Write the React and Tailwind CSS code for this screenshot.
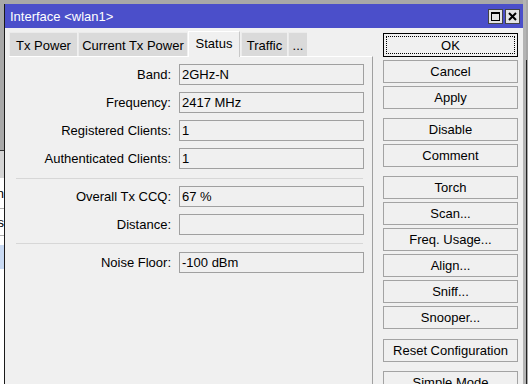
import React from "react";

const rows1 = [
  ["Band:", "2GHz-N"],
  ["Frequency:", "2417 MHz"],
  ["Registered Clients:", "1"],
  ["Authenticated Clients:", "1"],
];

const tabs = [
  { label: "Tx Power", w: "w-[68px]" },
  { label: "Current Tx Power", w: "w-[109px]" },
  { label: "Status", w: "w-[52px]", active: true },
  { label: "Traffic", w: "w-[46px]" },
  { label: "...", w: "w-[19px]" },
];

function Field({ label, value }) {
  return (
    <div className="flex items-center h-[21px] shrink-0">
      <div className="w-[163px] text-right pr-[1px] whitespace-nowrap">{label}</div>
      <div className="ml-[7px] w-[185px] h-[21px] border border-[#a0a0a0] bg-[#f0f0f0] pl-[2px] flex items-center">
        {value}
      </div>
    </div>
  );
}

function Btn({ children, className = "", focus = false }) {
  if (focus) {
    return (
      <div className={"relative shrink-0 h-[24px] border border-black bg-[#f0f0f0] flex items-center justify-center " + className}>
        <div className="absolute inset-[2px] border border-dotted border-black"></div>
        <span>{children}</span>
      </div>
    );
  }
  return (
    <div className={"shrink-0 h-[23px] border border-[#a3a3a3] bg-[#f0f0f0] flex items-center justify-center " + className}>
      {children}
    </div>
  );
}

function BgStrip() {
  // bit of another window peeking out on the left
  return (
    <div className="w-[4px] flex flex-col shrink-0">
      <div className="h-[150px] shrink-0 bg-[#a8a8a8]"></div>
      <div className="h-px shrink-0 bg-[#333]"></div>
      <div className="h-[27px] shrink-0 bg-[#d4d4d4]"></div>
      <div className="h-[30px] shrink-0 bg-white flex justify-end items-center overflow-hidden whitespace-nowrap">n</div>
      <div className="h-px shrink-0 bg-[#b0b0b0]"></div>
      <div className="h-[26px] shrink-0 bg-white flex justify-end items-center overflow-hidden whitespace-nowrap">s</div>
      <div className="h-px shrink-0 bg-[#b0b0b0]"></div>
      <div className="h-[9px] shrink-0 bg-white"></div>
      <div className="h-[24px] shrink-0 bg-[#c9daf3]"></div>
      <div className="flex-1 bg-white"></div>
    </div>
  );
}

export default function App() {
  return (
    <div
      className="w-[528px] h-[384px] overflow-hidden bg-[#a8a8a8] flex text-[13px] text-black leading-none"
      style={{ fontFamily: '"Liberation Sans", Arial, sans-serif' }}
    >
      <BgStrip />

      {/* window */}
      <div className="mt-[4px] w-[519px] flex flex-col border-l border-[#1a1a1a] shrink-0 min-h-0">
        {/* title bar */}
        <div className="h-[24px] shrink-0 bg-[#4b4fca] flex items-center pl-[5px] pr-[3px] text-white">
          <span className="flex-1">Interface &lt;wlan1&gt;</span>
          <div className="w-[15px] h-[15px] bg-[#e4e4e4] border border-[#444] flex items-center justify-center">
            <svg width="11" height="11" viewBox="0 0 11 11">
              <rect x="1.5" y="1.5" width="8" height="8" fill="none" stroke="#000" strokeWidth="1" />
              <rect x="1" y="1" width="9" height="2" fill="#000" />
            </svg>
          </div>
          <div className="ml-[2px] w-[15px] h-[15px] bg-[#e4e4e4] border border-[#444] flex items-center justify-center">
            <svg width="11" height="11" viewBox="0 0 11 11">
              <path d="M2 2 L9 9 M9 2 L2 9" stroke="#000" strokeWidth="2" />
            </svg>
          </div>
        </div>

        {/* body */}
        <div className="flex-1 min-h-0 overflow-hidden bg-[#f0f0f0] flex pl-[4px]">
          {/* tabs + panel */}
          <div className="w-[364px] flex flex-col pt-[3px]">
            <div className="flex items-end h-[25px] shrink-0 gap-[1px]">
              {tabs.map((t) =>
                t.active ? (
                  <div
                    key={t.label}
                    className={t.w + " relative z-10 -mb-px h-[26px] bg-[#f0f0f0] border-t border-l border-white border-r border-r-[#c8c8c8] flex items-center justify-center pb-[2px]"}
                  >
                    {t.label}
                  </div>
                ) : (
                  <div
                    key={t.label}
                    className={t.w + " h-[24px] bg-[#dadada] border-t border-l border-[#ebebeb] flex items-center justify-center pt-[1px]"}
                  >
                    {t.label}
                  </div>
                )
              )}
            </div>
            <div className="flex-1 border-t border-white border-r border-r-[#a0a0a0] pt-[7px] flex flex-col">
              <div className="flex flex-col gap-[7px]">
                {rows1.map(([l, v]) => (
                  <Field key={l} label={l} value={v} />
                ))}
              </div>
              <div className="mt-[9px] ml-[7px] w-[347px] h-px shrink-0 bg-[#d7d7d7]"></div>
              <div className="mt-[7px] flex flex-col gap-[7px]">
                <Field label="Overall Tx CCQ:" value="67 %" />
                <Field label="Distance:" value="" />
              </div>
              <div className="mt-[8px] ml-[7px] w-[347px] h-px shrink-0 bg-[#d7d7d7]"></div>
              <div className="mt-[8px]">
                <Field label="Noise Floor:" value="-100 dBm" />
              </div>
            </div>
          </div>

          {/* buttons */}
          <div className="ml-[10px] w-[135px] pt-[5px] flex flex-col">
            <Btn focus>OK</Btn>
            <Btn className="mt-[3px]">Cancel</Btn>
            <Btn className="mt-[3px]">Apply</Btn>
            <Btn className="mt-[9px]">Disable</Btn>
            <Btn className="mt-[3px]">Comment</Btn>
            <Btn className="mt-[9px]">Torch</Btn>
            <Btn className="mt-[3px]">Scan...</Btn>
            <Btn className="mt-[3px]">Freq. Usage...</Btn>
            <Btn className="mt-[3px]">Align...</Btn>
            <Btn className="mt-[3px]">Sniff...</Btn>
            <Btn className="mt-[3px]">Snooper...</Btn>
            <Btn className="mt-[10px]">Reset Configuration</Btn>
            <Btn className="mt-[9px]">Simple Mode</Btn>
          </div>
        </div>
      </div>

      {/* right edge */}
      <div className="flex-1 flex">
        <div className="w-[3px] bg-[#b4b4b4]"></div>
        <div className="flex-1 flex flex-col">
          <div className="h-[60px]"></div>
          <div className="flex-1 border-l border-[#222]"></div>
        </div>
      </div>
    </div>
  );
}
